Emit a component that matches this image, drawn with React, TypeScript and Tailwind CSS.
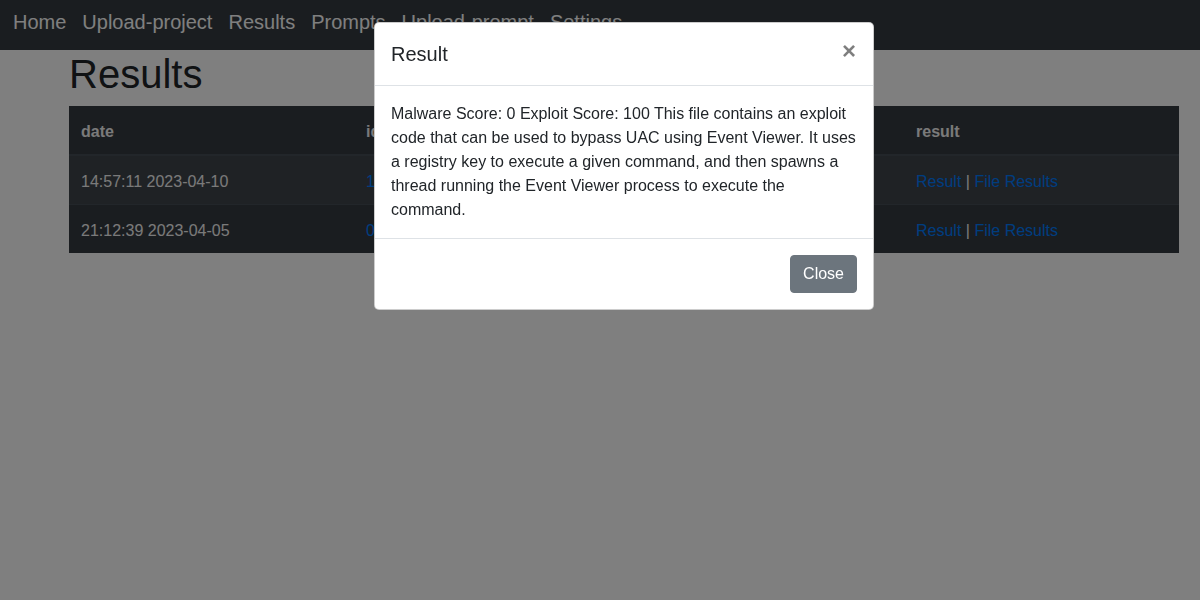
const navLinks = ["Home", "Upload-project", "Results", "Prompts", "Upload-prompt", "Settings"];

const rows = [
  { date: "14:57:11 2023-04-10", id: "1" },
  { date: "21:12:39 2023-04-05", id: "0" },
];

export default function App() {
  return (
    <div className="relative min-h-screen bg-white text-[#212529]" style={{ fontFamily: '"Liberation Sans", Arial, sans-serif' }}>
      <nav className="flex h-[50px] items-start bg-[#343a40] pl-[5px] pt-[7px]">
        {navLinks.map((l) => (
          <a key={l} className="px-[8px] text-[20px] leading-[30px] text-white">
            {l}
          </a>
        ))}
      </nav>

      <div className="ml-[69px] w-[1110px]">
        <h1 className="mb-2 text-[40px] font-medium leading-[48px]">Results</h1>
        <table className="w-full border-collapse bg-[#343a40] text-left text-[16px] leading-6 text-[#f4f4f4]">
          <thead>
            <tr className="border-b-2 border-[#454d55]">
              <th className="w-[285px] px-3 pb-[10px] pt-[14px] font-bold">date</th>
              <th className="w-[275px] px-3 pb-[10px] pt-[14px] font-bold">id</th>
              <th className="w-[275px] px-3 pb-[10px] pt-[14px] font-bold"></th>
              <th className="px-3 pb-[10px] pt-[14px] font-bold">result</th>
            </tr>
          </thead>
          <tbody>
            {rows.map((r, i) => (
              <tr key={r.date} className={i % 2 === 0 ? "bg-[#3e444a]" : "border-t border-[#454d55]"}>
                <td className="px-3 pb-[10px] pt-[14px]">{r.date}</td>
                <td className="px-3 pb-[10px] pt-[14px]">
                  <a className="text-[#007bff]">{r.id}</a>
                </td>
                <td className="px-3 pb-[10px] pt-[14px]"></td>
                <td className="px-3 pb-[10px] pt-[14px]">
                  <a className="text-[#007bff]">Result</a> | <a className="text-[#007bff]">File Results</a>
                </td>
              </tr>
            ))}
          </tbody>
        </table>
      </div>

      {/* modal backdrop */}
      <div className="fixed inset-0 bg-black/50" />

      {/* modal */}
      <div className="absolute left-[374px] top-[22px] w-[500px] rounded-[5px] border border-black/20 bg-white">
        <div className="flex items-start justify-between border-b border-[#dee2e6] p-4">
          <h5 className="text-[20px] font-medium leading-[30px]">Result</h5>
          <button className="mr-[1px] mt-[-3px] text-[24px] font-bold leading-[30px] text-black opacity-50">×</button>
        </div>
        <div className="p-4 text-[16px] leading-6">
          Malware Score: 0 Exploit Score: 100 This file contains an exploit code that can be used to bypass UAC using Event
          Viewer. It uses a registry key to execute a given command, and then spawns a thread running the Event Viewer
          process to execute the command.
        </div>
        <div className="flex justify-end border-t border-[#dee2e6] p-3">
          <button className="m-1 rounded-[4px] border border-[#6c757d] bg-[#6c757d] px-3 py-[6px] text-[16px] leading-6 text-white">
            Close
          </button>
        </div>
      </div>
    </div>
  );
}
